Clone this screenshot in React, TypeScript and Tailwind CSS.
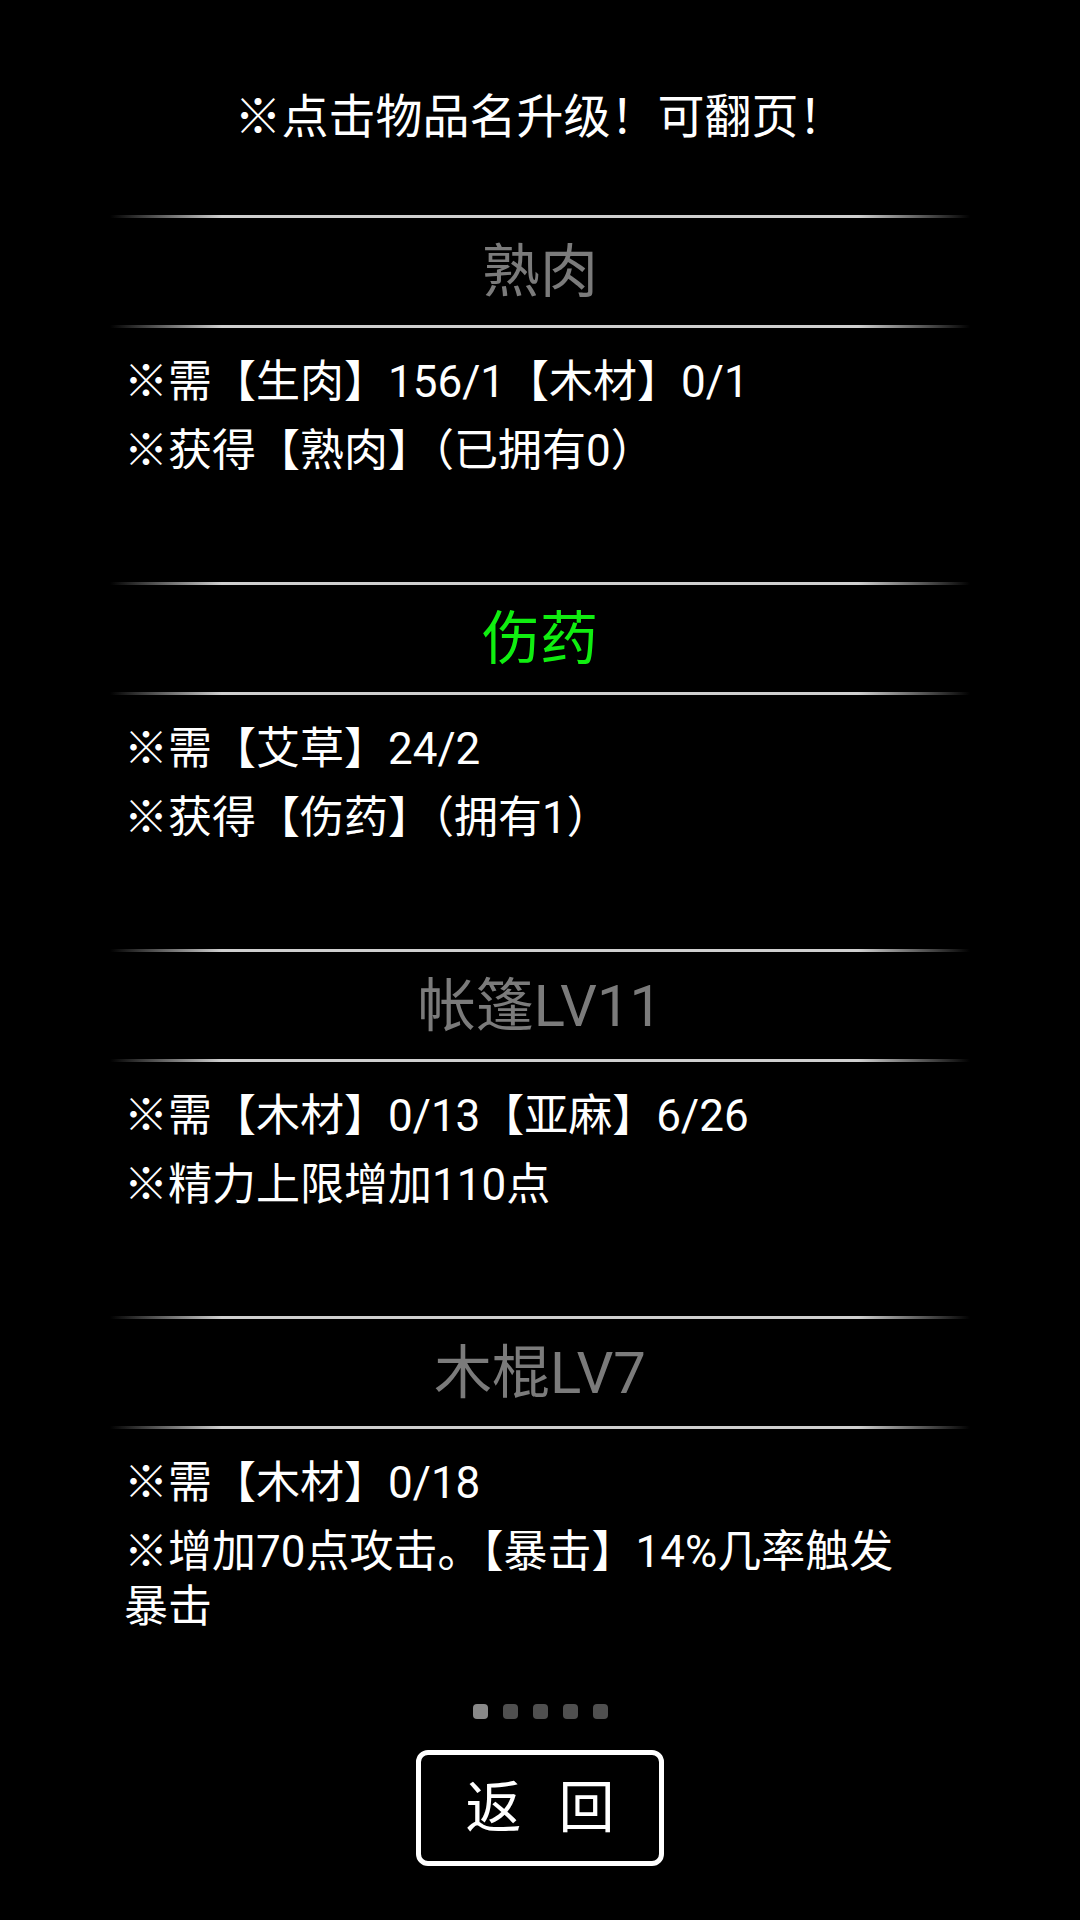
import React from "react";

type Item = { name: string; green?: boolean; lines: string[] };

const items: Item[] = [
  { name: "熟肉", lines: ["※需【生肉】156/1【木材】0/1", "※获得【熟肉】（已拥有0）"] },
  { name: "伤药", green: true, lines: ["※需【艾草】24/2", "※获得【伤药】（拥有1）"] },
  { name: "帐篷LV11", lines: ["※需【木材】0/13【亚麻】6/26", "※精力上限增加110点"] },
  { name: "木棍LV7", lines: ["※需【木材】0/18", "※增加70点攻击。【暴击】14%几率触发暴击"] },
];

function Divider() {
  return (
    <div className="h-[3px] w-full bg-[linear-gradient(to_right,transparent,#cfcfcf_13%,#cfcfcf_87%,transparent)]" />
  );
}

function Section({ item }: { item: Item }) {
  return (
    <div className="flex h-[367px] w-[860px] flex-col">
      <Divider />
      <div
        className={
          "flex h-[107px] items-center justify-center text-[58px] leading-none " +
          (item.green ? "text-[#10ee10]" : "text-[#7b7b7b]")
        }
      >
        {item.name}
      </div>
      <Divider />
      <div className="flex flex-col gap-[14px] pl-[14px] pr-[44px] pt-[27px] text-[44px] leading-[55px] text-white">
        {item.lines.map((l, i) => (
          <div key={i}>{l}</div>
        ))}
      </div>
    </div>
  );
}

export default function App() {
  return (
    <div
      className="flex h-[1920px] w-[1080px] flex-col items-center bg-black text-white"
      style={{ fontFamily: "Roboto, 'Noto Sans CJK SC', sans-serif" }}
    >
      <div className="h-[215px] pt-[92px] text-[47px] leading-[50px] text-white">
        ※点击物品名升级！可翻页！
      </div>
      {items.map((it, i) => (
        <Section key={i} item={it} />
      ))}
      <div className="mt-[21px] flex gap-[15px]">
        <div className="h-[15px] w-[15px] rounded-[4px] bg-[#888888]" />
        <div className="h-[15px] w-[15px] rounded-[4px] bg-[#4f4f4f]" />
        <div className="h-[15px] w-[15px] rounded-[4px] bg-[#4f4f4f]" />
        <div className="h-[15px] w-[15px] rounded-[4px] bg-[#4f4f4f]" />
        <div className="h-[15px] w-[15px] rounded-[4px] bg-[#4f4f4f]" />
      </div>
      <div className="mt-[31px] flex h-[116px] w-[248px] items-center justify-center gap-[37px] rounded-[12px] border-[5px] border-white text-[56px] leading-none text-white">
        <span>返</span>
        <span>回</span>
      </div>
    </div>
  );
}
